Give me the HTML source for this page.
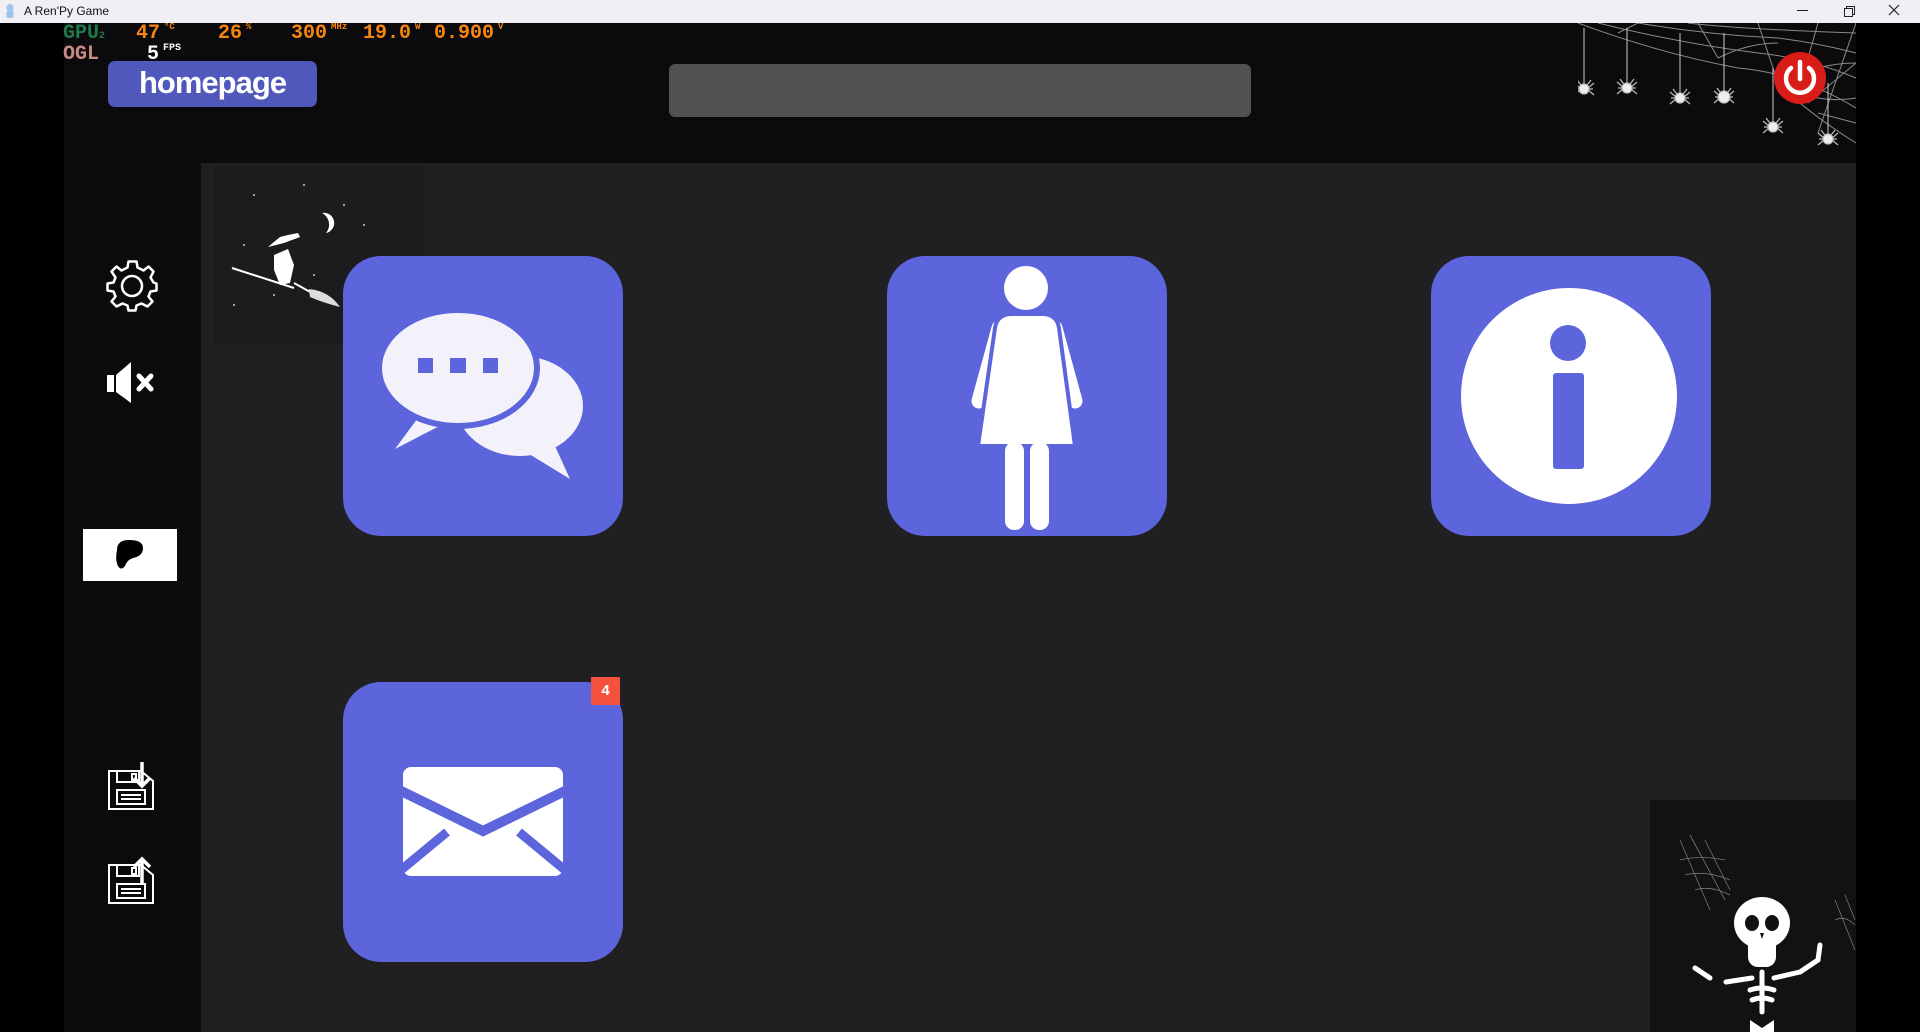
<!DOCTYPE html>
<html><head><meta charset="utf-8"><style>
*{margin:0;padding:0;box-sizing:border-box}
body{width:1920px;height:1032px;overflow:hidden;background:#000;position:relative;font-family:"Liberation Sans",sans-serif}
.abs{position:absolute}
#title{left:0;top:0;width:1920px;height:23px;background:#f0eff3;font-size:12px;color:#111}
#main{left:64px;top:23px;width:1792px;height:1009px;background:#0b0a0d}
#panel{left:201px;top:163px;width:1655px;height:869px;background:#201f22}
.tile{position:absolute;width:280px;height:280px;border-radius:38px;background:#5d65dc}
.hud{font-family:"Liberation Mono",monospace;font-weight:bold;position:absolute;font-size:20px;color:#f7850f}
.sup{font-size:9px;vertical-align:top;margin-left:4px}
</style></head><body>
<div id="title" class="abs">
<svg class="abs" style="left:5px;top:3px" width="10" height="16"><ellipse cx="5" cy="5" rx="3.5" ry="4" fill="#9ec3ea"/><rect x="1.5" y="8" width="7" height="7" rx="2" fill="#9ec3ea"/></svg>
<span class="abs" style="left:24px;top:4px">A Ren'Py Game</span>
<div class="abs" style="left:1797px;top:10px;width:11px;height:1px;background:#222"></div>
<div class="abs" style="left:1846px;top:6px;width:9px;height:9px;border:1px solid #222"></div>
<div class="abs" style="left:1844px;top:8px;width:9px;height:9px;border:1px solid #222;background:#f0eff3"></div>
<svg class="abs" style="left:1888px;top:4px" width="12" height="12"><path d="M1 1L11 11M11 1L1 11" stroke="#222" stroke-width="1.2"/></svg>
</div>
<div id="main" class="abs"></div>
<div id="panel" class="abs"></div>
<div class="hud" style="left:63px;top:22px;color:#1f7a4a">GPU<span style="font-size:10px">2</span></div>
<div class="hud" style="left:63px;top:43px;color:#c98a84">OGL</div>
<div class="hud" style="left:136px;top:22px">47<span class="sup">°C</span></div>
<div class="hud" style="left:218px;top:22px">26<span class="sup">%</span></div>
<div class="hud" style="left:291px;top:22px">300<span class="sup">MHz</span></div>
<div class="hud" style="left:363px;top:22px">19.0<span class="sup">W</span></div>
<div class="hud" style="left:434px;top:22px">0.900<span class="sup">V</span></div>
<div class="hud" style="left:147px;top:43px;color:#fff">5<span class="sup" style="font-size:10px">FPS</span></div>
<div class="abs" style="left:108px;top:61px;width:209px;height:46px;background:#5058bb;border-radius:7px;color:#fff;font-size:31px;font-weight:bold;text-align:center;line-height:44px;letter-spacing:-1px">homepage</div>
<div class="abs" style="left:669px;top:64px;width:582px;height:53px;background:#525053;border-radius:6px"></div>
<svg class="abs" style="left:1578px;top:23px" width="278" height="140">
<g stroke="#aaa" stroke-width="1" fill="none" opacity=".8">
<path d="M0 0 Q80 30 160 45 Q220 50 278 85"/><path d="M20 0 Q100 20 180 30 Q230 35 278 55"/><path d="M60 0 Q130 12 200 15 Q240 20 278 30"/>
<path d="M110 0 Q160 6 278 10"/><path d="M180 0L200 60M120 0L140 35M60 0L40 10M240 0L220 70M278 0L240 110M278 40L230 80M278 100L240 90"/>
<path d="M200 60 Q230 90 278 120"/><path d="M140 35Q170 20 200 20M200 60Q240 40 278 40M220 70Q250 80 278 75"/>
</g>
<g stroke="#ccc" stroke-width="1"><line x1="6" y1="5" x2="6" y2="62"/><line x1="49" y1="5" x2="49" y2="62"/><line x1="102" y1="10" x2="102" y2="72"/><line x1="146" y1="10" x2="146" y2="70"/><line x1="195" y1="45" x2="195" y2="100"/><line x1="250" y1="60" x2="250" y2="112"/></g>
<g fill="#eee" stroke="#bbb" stroke-width="1.2">
<g transform="translate(6,66)"><path d="M-10 -6L-3 0L-10 6M10 -6L3 0L10 6M-9 0H9M-7 -9L0 0L7 -9" fill="none"/><circle r="5"/></g>
<g transform="translate(49,65)"><path d="M-10 -6L-3 0L-10 6M10 -6L3 0L10 6M-9 0H9M-7 -9L0 0L7 -9" fill="none"/><circle r="5"/></g>
<g transform="translate(102,75)"><path d="M-10 -6L-3 0L-10 6M10 -6L3 0L10 6M-9 0H9M-7 -9L0 0L7 -9" fill="none"/><circle r="5"/></g>
<g transform="translate(146,74)"><path d="M-10 -6L-3 0L-10 6M10 -6L3 0L10 6M-9 0H9M-7 -9L0 0L7 -9" fill="none"/><circle r="6"/></g>
<g transform="translate(195,104)"><path d="M-10 -6L-3 0L-10 6M10 -6L3 0L10 6M-9 0H9M-7 -9L0 0L7 -9" fill="none"/><circle r="5"/></g>
<g transform="translate(250,116)"><path d="M-10 -6L-3 0L-10 6M10 -6L3 0L10 6M-9 0H9M-7 -9L0 0L7 -9" fill="none"/><circle r="5"/></g>
</g></svg>
<svg class="abs" style="left:1772px;top:50px" width="56" height="56"><circle cx="28" cy="28" r="26" fill="#d81d18"/><path d="M19 18A14 14 0 1 0 37 18" stroke="#fff" stroke-width="4.5" fill="none" stroke-linecap="round"/><line x1="28" y1="12" x2="28" y2="29" stroke="#fff" stroke-width="4.5" stroke-linecap="round"/></svg>
<div class="abs" style="left:214px;top:165px;width:210px;height:178px;background:#1c1b1e"></div>
<svg class="abs" style="left:214px;top:165px" width="210" height="178">
<path d="M108 48A10 10 0 1 1 112 68A13 13 0 0 0 108 48Z" fill="#fff"/>
<g fill="#ccc"><circle cx="40" cy="30" r="1"/><circle cx="90" cy="20" r="1"/><circle cx="130" cy="40" r="1"/><circle cx="30" cy="80" r="1"/><circle cx="150" cy="60" r="1"/><circle cx="60" cy="130" r="1"/><circle cx="20" cy="140" r="1"/><circle cx="100" cy="110" r="1"/></g>
<path d="M18 103L80 123" stroke="#fff" stroke-width="2"/>
<path d="M54 82L70 78L86 72L84 68L74 70L66 72Z" fill="#fff"/>
<path d="M60 90L74 84L80 100L76 118L66 120L60 105Z" fill="#fff"/>
<path d="M80 118L98 128" stroke="#fff" stroke-width="2"/>
<path d="M95 124Q115 126 126 142Q110 138 96 132Z" fill="#ddd"/>
</svg>
<svg class="abs" style="left:105px;top:259px" width="54" height="54" viewBox="-27 -27 54 54">
<g stroke="#fff" stroke-width="2.5" fill="none" stroke-linejoin="round">
<path d="M-4 -23H4L5 -17L11 -14L16 -18L21 -13L18 -7L21 -2L24 -1V6L18 7L16 12L20 17L15 22L9 19L4 21L3 26H-4L-5 21L-10 19L-16 22L-21 17L-17 12L-19 7L-25 6V-1L-19 -2L-17 -7L-21 -13L-16 -18L-11 -14L-5 -17Z" transform="translate(0.5,-1.5)"/>
<circle cx="0" cy="0" r="10"/></g></svg>
<svg class="abs" style="left:107px;top:362px" width="48" height="42"><rect x="0" y="13" width="7" height="17" fill="#fff"/><path d="M9 13L24 0V41L9 30Z" fill="#fff"/><path d="M32 14L44 27M44 14L32 27" stroke="#fff" stroke-width="5" stroke-linecap="round"/></svg>
<div class="abs" style="left:83px;top:529px;width:94px;height:52px;background:#fff"></div>
<svg class="abs" style="left:113px;top:538px" width="36" height="34"><path d="M4 12Q4 2 16 2Q30 2 30 10Q30 18 20 20Q14 22 12 28Q8 33 5 28Q2 22 4 12Z" fill="#000"/></svg>
<svg class="abs" style="left:106px;top:762px" width="50" height="50"><g stroke="#fff" stroke-width="2" fill="none"><path d="M3 9H35L47 19V47H3Z"/><rect x="11" y="9" width="22" height="11"/><rect x="26" y="12" width="4" height="6"/><rect x="11" y="28" width="28" height="14"/><path d="M15 33H35M15 37H35"/></g><path d="M36 0V24M28 16L36 24L44 16" stroke="#fff" stroke-width="3.5" fill="none"/></svg>
<svg class="abs" style="left:106px;top:856px" width="50" height="50"><g stroke="#fff" stroke-width="2" fill="none"><path d="M3 9H35L47 19V47H3Z"/><rect x="11" y="9" width="22" height="11"/><rect x="26" y="12" width="4" height="6"/><rect x="11" y="28" width="28" height="14"/><path d="M15 33H35M15 37H35"/></g><path d="M36 28V3M28 11L36 3L44 11" stroke="#fff" stroke-width="3.5" fill="none"/></svg>
<div class="tile" style="left:343px;top:256px"><svg width="280" height="280">
<path d="M150 176L227 223L212 190Z" fill="#f3f2fb"/><ellipse cx="177" cy="150" rx="63" ry="50" fill="#f3f2fb"/>
<path d="M52 193L110 163L80 155Z" fill="#f3f2fb"/>
<ellipse cx="115" cy="112" rx="76" ry="55" fill="#f3f2fb" stroke="#5d65dc" stroke-width="12" paint-order="stroke"/>
<rect x="75" y="102" width="15" height="15" fill="#5d65dc"/><rect x="107" y="102" width="16" height="15" fill="#5d65dc"/><rect x="140" y="102" width="15" height="15" fill="#5d65dc"/>
</svg></div>
<div class="tile" style="left:887px;top:256px"><svg width="280" height="280">
<circle cx="139" cy="32" r="22" fill="#fff"/>
<g stroke="#fff" stroke-width="15" stroke-linecap="round"><line x1="112" y1="72" x2="92" y2="145"/><line x1="168" y1="72" x2="188" y2="145"/></g>
<path d="M108 72Q110 58 125 58H155Q170 58 172 72L188 190H91Z" fill="#fff" stroke="#5d65dc" stroke-width="4"/>
<path d="M110 74Q112 60 125 60H155Q168 60 170 74Z" fill="#fff"/>
<rect x="118" y="186" width="19" height="88" rx="9" fill="#fff"/><rect x="143" y="186" width="19" height="88" rx="9" fill="#fff"/>
</svg></div>
<div class="tile" style="left:1431px;top:256px"><svg width="280" height="280">
<circle cx="138" cy="140" r="108" fill="#fff"/><circle cx="137" cy="87" r="18" fill="#5d65dc"/><rect x="122" y="117" width="31" height="96" rx="3" fill="#5d65dc"/>
</svg></div>
<div class="tile" style="left:343px;top:682px"><svg width="280" height="280">
<rect x="60" y="85" width="160" height="109" rx="8" fill="#fff"/>
<path d="M52 106L140 149L228 106" stroke="#5d65dc" stroke-width="10" fill="none"/>
<path d="M52 193L104 150M228 193L176 150" stroke="#5d65dc" stroke-width="9"/>
</svg></div>
<div class="abs" style="left:591px;top:677px;width:29px;height:28px;background:#f4523f;color:#fff;font-weight:bold;font-size:15px;text-align:center;line-height:28px">4</div>
<div class="abs" style="left:1650px;top:800px;width:206px;height:232px;background:#121114"></div>
<svg class="abs" style="left:1650px;top:800px" width="206" height="232">
<g stroke="#777" stroke-width=".8" fill="none"><path d="M30 40L60 110M40 35L75 100M55 40L80 90M30 60Q50 55 75 60M35 75Q55 70 80 80M45 90Q60 85 80 95"/><path d="M185 100L205 150M195 95L205 120M185 120Q195 115 205 125"/></g>
<ellipse cx="112" cy="123" rx="28" ry="26" fill="#fff"/><rect x="98" y="135" width="28" height="32" rx="10" fill="#fff"/>
<ellipse cx="102" cy="123" rx="7" ry="8" fill="#111"/><ellipse cx="122" cy="123" rx="7" ry="8" fill="#111"/><path d="M110 133L112 139L114 133Z" fill="#111"/>
<g stroke="#fff" stroke-width="5" stroke-linecap="round" fill="none"><path d="M76 182L102 178M124 178L150 172M112 172V212M150 172L168 160L170 145M60 178L45 168"/><path d="M100 190Q112 186 124 190M102 200Q112 196 122 200"/></g>
<path d="M100 220L112 228L124 220V232H100Z" fill="#fff"/>
</svg>
</body></html>
